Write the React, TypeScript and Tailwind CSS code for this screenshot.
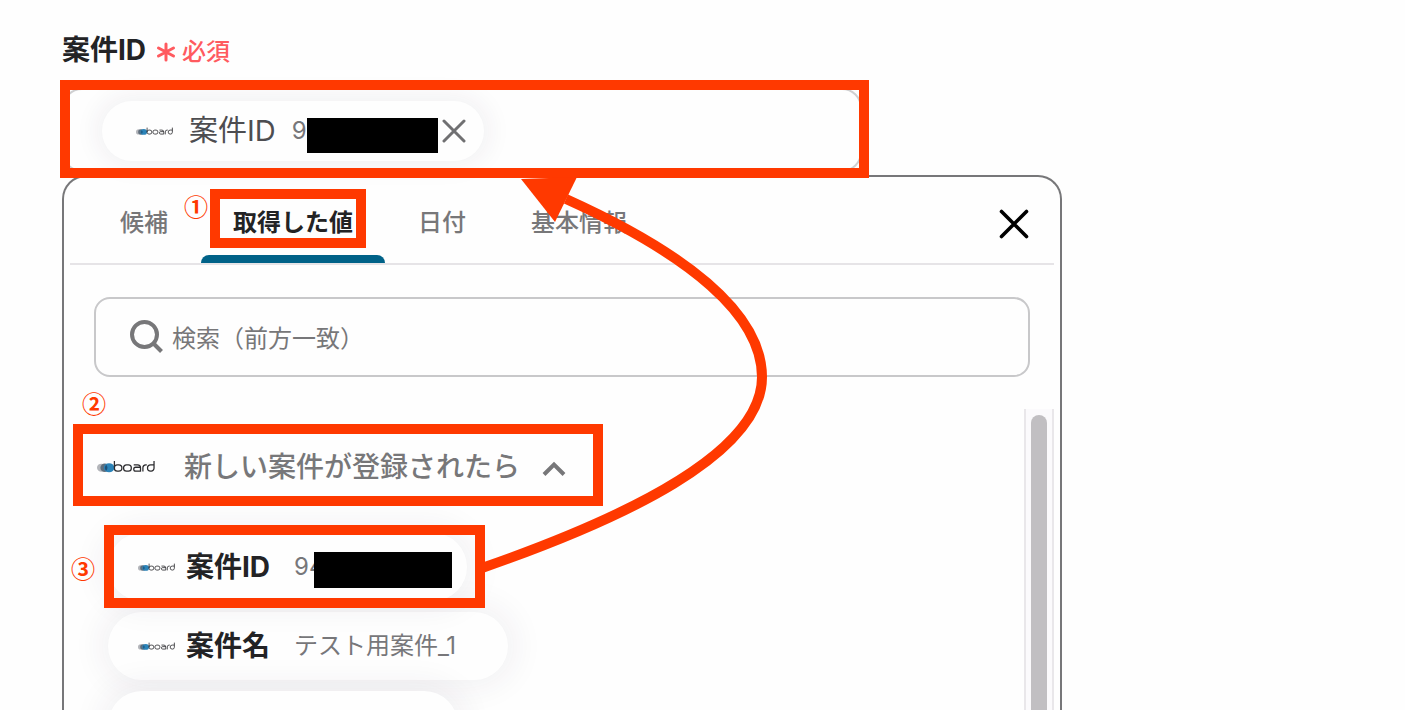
import React from 'react';
import clsx from 'clsx';

const tabs = ['候補', '取得した値', '日付', '基本情報'];

const BoardLogo = ({ className }: { className: string }) => (
  <svg viewBox="0 0 60 14" className={clsx('shrink-0', className)} role="img" aria-label="board">
    <ellipse cx="4.500" cy="8" rx="4.500" ry="4.200" fill="#b3b5ba" />
    <ellipse cx="8" cy="8" rx="4.500" ry="4.400" fill="#5f6e7c" />
    <ellipse cx="12.500" cy="8" rx="5.500" ry="4.600" fill="#2b83b8" />
    <path d="M9.500 4.800a5 5 0 0 1 0 6.400a5 5 0 0 1 0 -6.400z" fill="#1d5279" />
    <g fill="none" stroke="#2b2b2e" strokeWidth="1.300">
      <path d="M18 1V8.500a3 3 0 0 0 3 3h1.500a3 3 0 0 0 0 -6.500H21a3 3 0 0 0 -3 3" />
      <rect x="27.500" y="5" width="8" height="6.500" rx="3" />
      <path d="M38 5h4a3 3 0 0 1 3 3v3.500h-5a2 2 0 0 1 0 -4h5" />
      <path d="M47.500 12V8a3 3 0 0 1 3 -3h1" />
      <path d="M59 1V8.500a3 3 0 0 1 -3 3h-.500a3 3 0 0 1 0 -6.500H59" />
    </g>
  </svg>
);

const Marker = ({ className }: { className: string }) => (
  <span className={clsx('pointer-events-none absolute border-10 border-[#ff3900]', className)} />
);

const Step = ({ label, className }: { label: string; className: string }) => (
  <span className={clsx("absolute font-['Noto_Sans_CJK_JP',sans-serif] text-2xl leading-6 font-bold text-[#ff3900]", className)}>
    {label}
  </span>
);

export default function App() {
  return (
    <main className="relative flex h-screen flex-col overflow-hidden bg-[#fefefe] px-[62px] pt-8 font-['Inter','Noto_Sans_CJK_JP',sans-serif] text-[#232325]">
      <div className="flex h-9 items-center gap-1.5">
        <h1 className="text-[28px] leading-9 font-bold">案件ID</h1>
        <p className="flex items-center gap-1.5 pt-1 pl-1 text-2xl font-medium text-[#ff5a5f]">
          <svg viewBox="0 0 20 20" className="size-5" fill="none" stroke="currentColor" strokeWidth="3" strokeLinecap="round" aria-hidden="true">
            <path d="M10 2v16M2.500 6l15 8M17.500 6l-15 8" />
          </svg>
          必須
        </p>
      </div>

      <div className="relative mt-5 flex h-[84px] w-[800px] max-w-full shrink-0 items-center rounded-[20px] border-2 border-[#cfcfd1] pt-0.5 pl-[38px]">
        <div className="flex h-[60px] w-[382px] items-center rounded-full bg-[#fefefe] pl-[34px] shadow-[0_0_24px_6px_rgba(50,40,70,0.06)]">
          <BoardLogo className="w-[37px]" />
          <span className="ml-4 text-[29px] text-[#4d4d50]">案件ID</span>
          <span className="ml-4 text-2xl text-[#77777a]">9</span>
          <span className="mt-2 h-[35px] w-[131px] bg-black" />
          <button type="button" aria-label="案件IDを削除" className="ml-1 text-[#707072]">
            <svg viewBox="0 0 24 24" className="size-6" fill="none" stroke="currentColor" strokeWidth="3" strokeLinecap="round">
              <path d="M2 2l20 20M22 2L2 22" />
            </svg>
          </button>
        </div>
        <Marker className="-top-2.5 -right-[9px] -bottom-2 -left-1" />
      </div>

      <section className="mt-[3px] flex w-[1000px] max-w-full min-h-0 flex-1 flex-col rounded-t-3xl border-2 border-b-0 border-[#777779]">
        <div className="mx-1.5 flex h-[88px] shrink-0 items-stretch border-b-2 border-[#e6e4e7]">
          <nav className="flex flex-1 gap-px pl-[18px]">
            {tabs.map((tab, i) => (
              <button
                key={tab}
                type="button"
                className={clsx('relative px-8 pt-1.5 text-2xl', i === 1 ? 'font-bold text-[#232325]' : 'font-medium text-[#777779]')}
              >
                {tab}
                {i === 1 && (
                  <>
                    <span className="absolute inset-x-0 bottom-0 h-2 rounded-t-lg bg-[#006288]" />
                    <Marker className="top-3 right-[19px] bottom-[15px] left-[9px]" />
                    <Step label="①" className="top-[17px] -left-[17px]" />
                  </>
                )}
              </button>
            ))}
          </nav>
          <button type="button" aria-label="閉じる" className="mr-6 pt-2 text-black">
            <svg viewBox="0 0 32 32" className="size-8" fill="none" stroke="currentColor" strokeWidth="3.600" strokeLinecap="round">
              <path d="M3.500 3.500l25 25M28.500 3.500L3.500 28.500" />
            </svg>
          </button>
        </div>

        <label className="mx-[30px] mt-8 flex h-20 shrink-0 items-center gap-2 rounded-2xl border-2 border-[#c8c8ca] px-8">
          <svg viewBox="0 0 36 36" className="size-9 shrink-0 text-[#777779]" fill="none" stroke="currentColor" strokeWidth="4" aria-hidden="true">
            <circle cx="16.500" cy="15.500" r="12.500" />
            <path d="M25.500 24.500l8 8" />
          </svg>
          <input
            type="text"
            aria-label="検索"
            placeholder="検索（前方一致）"
            className="min-w-0 flex-1 pt-1 text-2xl outline-none placeholder:text-[#777779]"
          />
        </label>

        <div className="flex min-h-0 flex-1">
          <div className="flex-1 overflow-hidden">
            <div className="relative mt-[47px] ml-[9px] w-[530px]">
              <button type="button" className="flex h-[82px] w-full items-center pt-1 pl-6 text-[28px] font-medium text-[#777779]">
                <BoardLogo className="w-[58px]" />
                <span className="ml-[29px]">新しい案件が登録されたら</span>
                <svg viewBox="0 0 24 24" className="mt-1 ml-[22px] size-6" fill="none" stroke="currentColor" strokeWidth="4" aria-hidden="true">
                  <path d="M2 17.500l10-10 10 10" />
                </svg>
              </button>
              <Marker className="inset-0" />
              <Step label="②" className="-top-[33px] left-[9px]" />
            </div>

            <ul className="mt-[27px] ml-11 flex flex-col items-start gap-[11px]">
              <li className="relative">
                <button type="button" className="flex h-[68px] w-[359px] items-center rounded-full bg-[#fefefe] pl-[30px] shadow-[0_0_32px_8px_rgba(50,40,70,0.06)]">
                  <BoardLogo className="w-[37px]" />
                  <span className="ml-[11px] text-[28px] font-bold">案件ID</span>
                  <span className="ml-6 text-2xl text-[#77777a]">94</span>
                  <span className="relative mt-1.5 -ml-2.5 h-9 w-[138px] bg-black" />
                </button>
                <Marker className="-top-2 -right-[18px] -bottom-[7px] -left-1" />
                <Step label="③" className="top-[23px] -left-[37px]" />
              </li>
              <li>
                <button type="button" className="flex h-[68px] w-[400px] items-center rounded-full bg-[#fefefe] pl-[30px] shadow-[0_0_32px_8px_rgba(50,40,70,0.06)]">
                  <BoardLogo className="w-[37px]" />
                  <span className="ml-[11px] text-[28px] font-bold">案件名</span>
                  <span className="ml-6 text-2xl text-[#77777a]">テスト用案件_1</span>
                </button>
              </li>
              <li className="h-[68px] w-[350px] rounded-full bg-[#fefefe] shadow-[0_0_32px_8px_rgba(50,40,70,0.06)]" />
            </ul>
          </div>
          <div className="mt-8 mr-1.5 w-[30px] border-x-2 border-[#e9e7ea] bg-[#fbfafc] px-[5px] pt-1.5">
            <div className="h-full rounded-t-full bg-[#c1bfc2]" />
          </div>
        </div>
      </section>

      {/* arrow from the picked value up to the field */}
      <svg viewBox="0 0 1405 710" className="pointer-events-none absolute top-0 left-0 h-[710px] w-[1405px] max-w-none" aria-hidden="true">
        <path d="M566 199C690 255 762 315 762 377C762 455 620 520 482 568" fill="none" stroke="#ff3900" strokeWidth="10" />
        <path d="M521 179L577 177L555 222Z" fill="#ff3900" />
      </svg>
    </main>
  );
}
